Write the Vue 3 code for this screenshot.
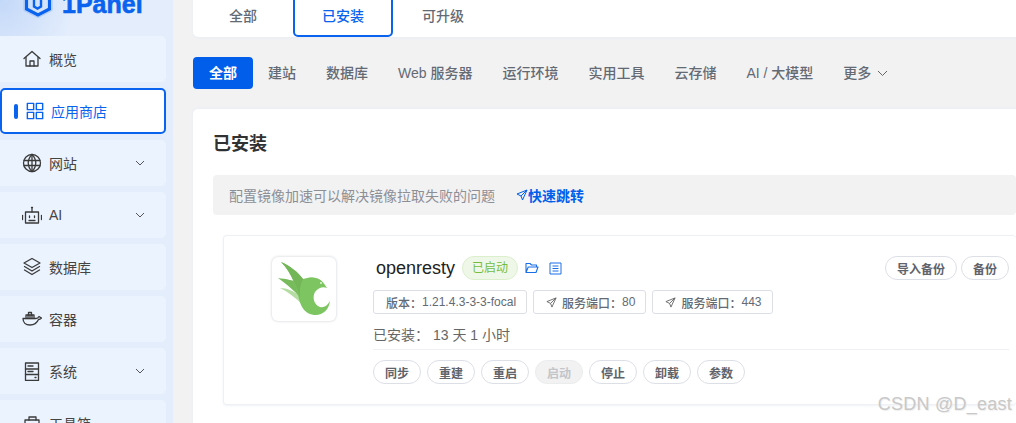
<template>
  <div class="page">
    <!-- 侧边栏 -->
    <aside class="sidebar">
      <div class="logo">
        <svg class="logo-mark" width="30" height="36" viewBox="0 0 30 36" fill="none">
          <path d="M1 0V28.500L15 35.500 29 28.500V0" stroke="#9fc0f7" stroke-width="0.800" />
          <path d="M3.500 0V27L15 33 26.500 27V0" stroke="#0a63ee" stroke-width="3.200" />
          <path d="M11 0V24.500l3.500 2 3.500-2V0" stroke="#0a63ee" stroke-width="2.400" />
        </svg>
        <span class="logo-text">1Panel</span>
      </div>
      <nav class="menu">
        <div v-for="item in menus" :key="item.name" :class="['menu-item', { active: item.active }]">
          <i v-if="item.active" class="active-bar"></i>
          <svg class="menu-icon" width="20" height="20" viewBox="0 0 20 20" fill="none" stroke-linecap="round" stroke-linejoin="round">
            <path v-for="d in item.paths" :key="d" :d="d" />
          </svg>
          <span class="menu-name">{{ item.name }}</span>
          <svg v-if="item.arrow" class="menu-arrow" width="10" height="6" viewBox="0 0 10 6" fill="none">
            <path d="M1 1l4 4 4-4" stroke="#555" stroke-width="1" />
          </svg>
        </div>
      </nav>
    </aside>

    <main class="main">
      <!-- 顶部标签 -->
      <div class="tabs">
        <div v-for="tab in tabs" :key="tab" :class="['tab', { active: tab === '已安装' }]">{{ tab }}</div>
      </div>

      <!-- 分类 -->
      <div class="categories">
        <div v-for="cat in categories" :key="cat" :class="['cat', { active: cat === '全部' }]">{{ cat }}</div>
        <div class="cat more">
          更多
          <svg width="11" height="7" viewBox="0 0 11 7" fill="none"><path d="M1 1l4.500 4.500L10 1" stroke="#666" stroke-width="1" /></svg>
        </div>
      </div>

      <!-- 已安装 -->
      <section class="panel">
        <h2 class="panel-title">已安装</h2>
        <div class="notice">
          <span>配置镜像加速可以解决镜像拉取失败的问题</span>
          <a class="notice-link">
            <svg width="12" height="12" viewBox="0 0 12 12" fill="none"><path d="M11 1 1 5l4 2 1.500 4z M11 1 5 7" stroke="#005eeb" stroke-width="1" stroke-linejoin="round" /></svg>
            快速跳转
          </a>
        </div>

        <div class="app-card">
          <div class="app-icon">
            <svg width="64" height="64" viewBox="2 2 64 64">
              <path d="M10 33C17 33 24 36 30 41L33 50C26 43 18 37 10 33Z" fill="#b4dca3" />
              <path d="M8 23C16 24 24 25 30 29L33 46C27 38 18 30 8 23Z" fill="#77bb5c" />
              <path d="M11 7C20 11 28 17 33 24 37 23 41 21 46 23 51 24 54 28 57 33 53 31 48 33 45 37 42 42 44 50 50 52 54 53 57 51 60 46 59 55 52 61 44 60 35 59 31 52 29 44 27 34 22 18 11 7Z" fill="#7cc561" />
              <path d="M11 7C20 11 28 17 33 24 30 30 29 37 30 45 28 34 22 18 11 7Z" fill="#72b658" />
              <circle cx="51" cy="28" r="1" fill="#e4f3dc" />
            </svg>
          </div>
          <div class="app-info">
            <div class="app-head">
              <span class="app-name">openresty</span>
              <span class="status">已启动</span>
              <svg class="head-icon" width="14" height="12" viewBox="0 0 14 12" fill="none"><path d="M1 10.500V1.500h4l1.500 1.500h5V5M1 10.500h10l2-5.500H3.200z" stroke="#1a6fe8" stroke-width="1.100" stroke-linejoin="round" /></svg>
              <svg class="head-icon doc" width="13" height="13" viewBox="0 0 13 13" fill="none"><path d="M1 1h11v11H1zM3.500 4h6M3.500 6.500h6M3.500 9h6" stroke="#1a6fe8" stroke-width="1" /></svg>
              <div class="head-actions">
                <button class="pill">导入备份</button>
                <button class="pill">备份</button>
              </div>
            </div>
            <div class="tags">
              <span class="tag"><b>版本：</b>1.21.4.3-3-3-focal</span>
              <span v-for="port in ports" :key="port" class="tag">
                <svg width="11" height="11" viewBox="0 0 12 12" fill="none"><path d="M11 1 1 5l4 2 1.500 4z M11 1 5 7" stroke="#666" stroke-width="1" stroke-linejoin="round" /></svg>
                <b>服务端口：</b>{{ port }}
              </span>
            </div>
            <div class="uptime">已安装：<span>13 天 1 小时</span></div>
            <div class="actions">
              <button v-for="btn in buttons" :key="btn" :class="['pill', { disabled: btn === '启动' }]">{{ btn }}</button>
            </div>
          </div>
        </div>
      </section>
    </main>

    <div class="watermark">CSDN @D_east</div>
  </div>
</template>

<script setup>
// 菜单图标都是 20x20 的描边路径
const menus = [
  { name: '概览', paths: ['M2 9.500 10 2.500l8 7', 'M4 8.500V17h12V8.500', 'M8 17v-5h4v5'] },
  { name: '应用商店', active: true, paths: ['M1.500 1.500h7v7h-7z', 'M11.500 1.500h7v7h-7z', 'M1.500 11.500h7v7h-7z', 'M11.500 11.500h7v7h-7z'] },
  {
    name: '网站',
    arrow: true,
    paths: ['M10 1.500a8.500 8.500 0 1 0 0 17 8.500 8.500 0 0 0 0-17z', 'M10 1.500c-5 5-5 12 0 17 5-5 5-12 0-17z', 'M10 1.500v17', 'M2 7.500h16', 'M2 12.500h16'],
  },
  {
    name: 'AI',
    arrow: true,
    paths: ['M3.500 7h13v11h-13z', 'M10 7V3', 'M9.500 2.500h1', 'M.5 10.500v4', 'M19.500 10.500v4', 'M7.500 11v1.500', 'M12.500 11v1.500', 'M7 15.500h6'],
  },
  { name: '数据库', paths: ['M10 1.500 18 6l-8 4.500L2 6z', 'M2.500 9.500 10 14l7.500-4.500', 'M2.500 13 10 17.500 17.500 13'] },
  {
    name: '容器',
    paths: [
      'M1 9.500h13c1.500 0 2.500-1 3-2l2.500 1.500c-1 1-2 1.500-3 1.500-1.500 3.500-5 5.500-8.500 5.500-4.500 0-7-2.500-7-6.500z',
      'M4 9.500V6h8v3.500',
      'M6.500 6V3.500h3V6',
      'M6 6v3.500',
      'M8 6v3.500',
      'M10 6v3.500',
    ],
  },
  { name: '系统', arrow: true, paths: ['M3.500 2h13v17.500h-13z', 'M3.500 8h13', 'M3.500 13.500h13', 'M6 5h5', 'M6 10.500h5', 'M13 16.500h1'] },
  { name: '工具箱', paths: ['M3 7h14v10H3z', 'M7 7V4h7v3', 'M3 11.500h14'] },
]

const tabs = ['全部', '已安装', '可升级']
const categories = ['全部', '建站', '数据库', 'Web 服务器', '运行环境', '实用工具', '云存储', 'AI / 大模型']
const ports = [80, 443]
const buttons = ['同步', '重建', '重启', '启动', '停止', '卸载', '参数']
</script>

<style>
html,
body {
  margin: 0;
  overflow: hidden;
}
</style>

<style scoped>
.page {
  position: relative;
  display: flex;
  width: 1016px;
  height: 423px;
  overflow: hidden;
  background: #f2f2f3;
  font-family: 'Liberation Sans', 'Noto Sans CJK SC', sans-serif;
  font-size: 14px;
  color: #646a73;
}

.sidebar {
  flex: 0 0 173px;
  background: radial-gradient(circle at 0 0, #c3d8f8 0, #e3edfc 75px);
  background-color: #e3edfc;
}

.logo {
  display: flex;
  align-items: flex-end;
  height: 36px;
  overflow: hidden;
}

.logo-mark {
  margin: -18px 0 18px 23px;
  flex: none;
}

.logo-text {
  margin: -20px 0 17px 9px;
  font-size: 25px;
  font-weight: 700;
  line-height: 30px;
  color: #0a63ee;
  -webkit-text-stroke: 0.6px #0a63ee;
}

.menu {
  display: flex;
  flex-direction: column;
  gap: 6px;
  width: 166px;
}

.menu-item {
  position: relative;
  display: flex;
  align-items: center;
  flex: none;
  height: 46px;
  padding-left: 22px;
  box-sizing: border-box;
  background: #ebf3fe;
  border-radius: 0 5px 5px 0;
  color: #444;
}

.menu-item.active {
  padding-left: 24px;
  background: #fff;
  border: 2px solid #0a63ee;
  border-radius: 5px;
  color: #0a63ee;
}

.active-bar {
  position: absolute;
  left: 12px;
  top: 14px;
  width: 4px;
  height: 15px;
  border-radius: 2px;
  background: #0a63ee;
}

.menu-icon {
  flex: none;
  stroke: #3a3a3a;
  stroke-width: 1.300;
}

.active .menu-icon {
  stroke: #0a63ee;
  width: 18px;
  height: 18px;
  stroke-width: 1.600;
}

.menu-name {
  margin-left: 7px;
}

.menu-arrow {
  position: absolute;
  right: 21px;
  top: 20px;
}

.main {
  flex: 1;
  min-width: 0;
  padding: 0 0 0 20px;
}

.tabs {
  display: flex;
  height: 37px;
  margin-right: -20px;
  background: #fff;
  border-radius: 0 0 5px 5px;
  box-shadow: 0 1px 2px #e9ecf2;
}

.tab {
  width: 100px;
  line-height: 32px;
  text-align: center;
  font-weight: 500;
  box-sizing: border-box;
}

.tab.active {
  margin-top: -6px;
  padding-top: 4px;
  border: 2px solid #0a63ee;
  border-radius: 5px;
  color: #0a63ee;
}

.categories {
  display: flex;
  align-items: center;
  height: 32px;
  margin-top: 20px;
}

.cat {
  padding: 0 15px;
  line-height: 32px;
  font-weight: 500;
}

.cat.active {
  width: 60px;
  padding: 0;
  text-align: center;
  box-sizing: border-box;
  background: #005eeb;
  border-radius: 4px;
  color: #fff;
  font-weight: 700;
}

.more svg {
  margin-left: 2px;
  vertical-align: 1px;
}

.panel {
  margin: 20px -30px 0 0;
  padding: 21px 30px 0 20px;
  height: 330px;
  background: #fff;
  box-shadow: 0 -1px 2px #e9ecf2;
  border-radius: 5px 0 0 0;
}

.panel-title {
  margin: 0;
  font-size: 18px;
  line-height: 28px;
  font-weight: 700;
  color: #303133;
}

.notice {
  display: flex;
  align-items: center;
  height: 40px;
  margin-top: 17px;
  padding-left: 16px;
  background: #f2f2f3;
  border-radius: 4px;
  color: #8c8f96;
}

.notice-link {
  display: flex;
  align-items: center;
  margin-left: 21px;
  color: #005eeb;
  font-weight: 700;
}

.app-card {
  display: flex;
  margin: 20px 0 0 10px;
  height: 170px;
  box-sizing: border-box;
  padding: 21px 0 0 48px;
  border: 1px solid #eef0f4;
  border-right: 0;
  border-radius: 4px;
  box-shadow: 0 1px 3px #eef2f8;
}

.app-icon {
  display: flex;
  align-items: center;
  justify-content: center;
  flex: none;
  width: 64px;
  height: 64px;
  background: #fff;
  border-radius: 6px;
  box-shadow: 0 0 3px #c9ccd1;
}

.app-info {
  flex: 1;
  margin: -1px 0 0 37px;
  padding-right: 7px;
  min-width: 0;
}

.app-head {
  display: flex;
  align-items: center;
  height: 24px;
}

.app-name {
  margin-left: 3px;
  font-size: 18px;
  color: #222;
}

.status {
  width: 56px;
  margin-left: 7px;
  line-height: 22px;
  text-align: center;
  font-size: 12px;
  color: #75bd3e;
  background: #eff8e8;
  border: 1px solid #dcefcd;
  border-radius: 12px;
  box-sizing: border-box;
}

.head-icon {
  margin-left: 7px;
}

.head-icon.doc {
  margin-left: 10px;
}

.head-actions {
  display: flex;
  gap: 4px;
  margin-left: auto;
}

.pill {
  height: 24px;
  padding: 0 11px;
  background: #fff;
  border: 1px solid #dcdfe6;
  border-radius: 12px;
  font: 600 12px 'Liberation Sans', 'Noto Sans CJK SC', sans-serif;
  color: #5f636b;
}

.tags {
  display: flex;
  gap: 6px;
  margin-top: 10px;
}

.tag {
  display: flex;
  align-items: center;
  height: 24px;
  padding: 0 10px 0 12px;
  box-sizing: border-box;
  border: 1px solid #dcdfe6;
  border-radius: 3px;
  font-size: 12px;
  color: #646a73;
}

.tag b {
  font-weight: 500;
}

.tag svg {
  margin-right: 5px;
}

.uptime {
  margin-top: 11px;
  line-height: 20px;
  color: #666;
}

.uptime span {
  margin-left: 4px;
}

.actions {
  display: flex;
  gap: 6px;
  margin-top: 4px;
  padding-top: 10px;
  border-top: 1px solid #eef0f4;
}

.actions .pill {
  width: 48px;
  padding: 0;
}

.pill.disabled {
  background: #f2f2f3;
  border-color: #ebecee;
  color: #c3c5c9;
}

/* 截图水印 */
.watermark {
  position: absolute;
  right: 4px;
  bottom: 8px;
  font-size: 18px;
  letter-spacing: 0.25px;
  color: #c8c8c8;
  text-shadow: 1px 1px 1px #eee;
}
</style>
